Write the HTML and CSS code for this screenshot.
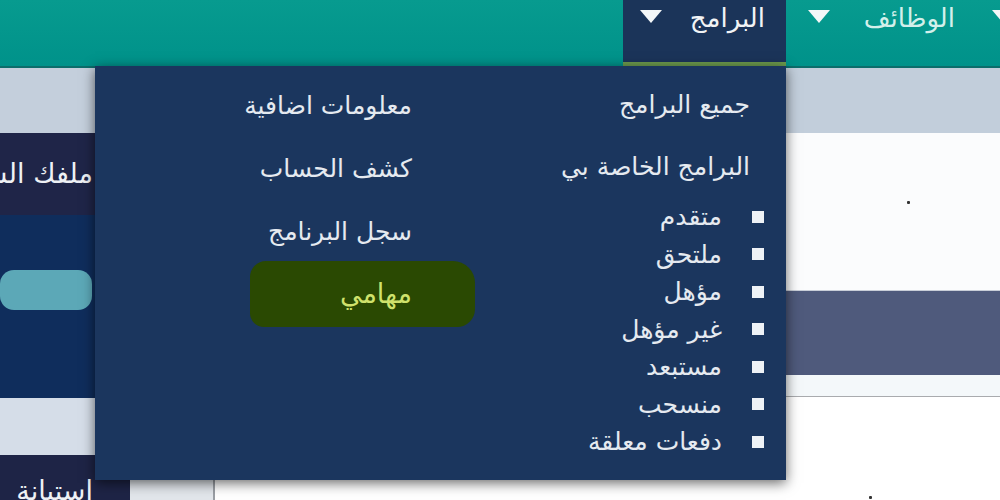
FILE: index.html
```html
<!DOCTYPE html>
<html lang="ar" dir="rtl">
<head>
<meta charset="utf-8">
<title>البرامج</title>
<link rel="stylesheet" href="styles.css">
</head>
<body>
<header class="topbar">
  <nav class="nav">
    <div class="nav-item nav-home"><span class="nav-label">الرئيسية</span><span class="caret"></span></div>
    <div class="nav-item nav-jobs"><span class="nav-label">الوظائف</span><span class="caret"></span></div>
    <div class="nav-item nav-programs active"><span class="nav-label">البرامج</span><span class="caret"></span>
      <div class="dropdown">
        <div class="dd-col dd-col-main">
          <a class="dd-link">جميع البرامج</a>
          <a class="dd-link">البرامج الخاصة بي</a>
          <ul class="dd-sub">
            <li><span class="sq"></span><span>متقدم</span></li>
            <li><span class="sq"></span><span>ملتحق</span></li>
            <li><span class="sq"></span><span>مؤهل</span></li>
            <li><span class="sq"></span><span>غير مؤهل</span></li>
            <li><span class="sq"></span><span>مستبعد</span></li>
            <li><span class="sq"></span><span>منسحب</span></li>
            <li><span class="sq"></span><span>دفعات معلقة</span></li>
          </ul>
        </div>
        <div class="dd-col dd-col-extra">
          <a class="dd-link">معلومات اضافية</a>
          <a class="dd-link">كشف الحساب</a>
          <a class="dd-link">سجل البرنامج</a>
          <a class="dd-link"><span class="mark">مهامي</span></a>
        </div>
      </div>
    </div>
  </nav>
</header>
<main class="page">
  <section class="content">
    <div class="band"></div>
    <div class="row-white"><span class="dot"></span></div>
    <div class="row-slate"></div>
    <div class="row-gap"></div>
    <div class="row-table">
      <div class="tcol-main"><span class="dot"></span></div>
      <div class="tcol-edge"></div>
    </div>
  </section>
  <aside class="sidebar">
    <div class="side-band"></div>
    <div class="side-profile">ملفك الشخصي</div>
    <div class="side-nav"><div class="side-pill"></div></div>
    <div class="side-light"></div>
    <div class="side-survey">إستبانة</div>
  </aside>
</main>
</body>
</html>
```

FILE: styles.css
```css
* { box-sizing: border-box; margin: 0; padding: 0; }
html, body { width: 1000px; height: 500px; overflow: hidden; }
body {
  font-family: "DejaVu Sans", sans-serif;
  background: #fff;
  direction: rtl;
}

/* top bar */
.topbar {
  height: 68px;
  background: linear-gradient(#079b8f, #00928a);
  border-bottom: 2px solid #0c6d6b;
  position: relative;
  z-index: 5;
}
.nav { display: flex; height: 66px; }
.nav-item {
  display: flex;
  align-items: flex-start;
  height: 66px;
  padding: 0 21px 0 17px;
  color: #d3f0eb;
  font-size: 26px;
  line-height: 36px;
  position: relative;
  flex: none;
  white-space: nowrap;
}
.nav-home { width: 240px; margin-right: -215px; }
.nav-jobs { width: 189px; padding-right: 20px; padding-left: 22px; }
.nav-programs { width: 163px; }
.nav-item.active {
  background: #1b3459;
  border-bottom: 4px solid #6c9a4d;
  color: #f1f3f5;
}
.caret {
  margin-right: auto;
  margin-top: 10px;
  width: 0; height: 0;
  border-left: 11px solid transparent;
  border-right: 11px solid transparent;
  border-top: 13px solid #f4f7f8;
}

/* dropdown */
.dropdown {
  position: absolute;
  top: 66px;
  right: 0;
  width: 691px;
  height: 414px;
  background: #1b365e;
  box-shadow: 0 3px 12px rgba(0, 0, 0, 0.6);
  padding: 8px 36px 0 0;
  display: grid;
  grid-template-columns: 338px 1fr;
  font-size: 25px;
  color: #e5eaf0;
}
.dd-link { display: block; height: 62px; line-height: 62px; white-space: nowrap; }
.dd-col-extra .dd-link { height: 63px; line-height: 63px; }
.dd-sub { list-style: none; margin-right: -14px; }
.dd-sub li {
  display: flex;
  align-items: center;
  gap: 30px;
  height: 37.5px;
  line-height: 37.5px;
  white-space: nowrap;
}
.sq { width: 12px; height: 12px; background: #eef2f6; flex: none; }
.mark {
  display: inline-block;
  margin-right: -63px;
  padding: 0 63px 0 90px;
  height: 66px;
  margin-top: -3px;
  line-height: 66px;
  background: #2a4902;
  border-radius: 16px 22px 18px 14px;
  color: #cfe26c;
  font-size: 27px;
}

/* page below bar */
.page { display: flex; height: 432px; }
.sidebar {
  width: 130px;
  flex: none;
  display: flex;
  flex-direction: column;
  overflow: hidden;
  white-space: nowrap;
  color: #eef1f5;
  font-size: 27px;
}
.side-band { height: 65px; background: #c4cfdc; }
.side-profile {
  height: 82px;
  background: #1f2548;
  padding-right: 37px;
  line-height: 82px;
  overflow: hidden;
}
.side-nav { height: 183px; background: #0f2d5c; padding-top: 55px; }
.side-pill {
  width: 92px;
  height: 40px;
  margin-right: 38px;
  background: #5ca8b7;
  border-radius: 14px;
}
.side-light { height: 57px; background: #d5dde8; }
.side-survey {
  flex: 1;
  background: #1e2446;
  padding: 20px 37px 0 0;
  overflow: hidden;
}

.content { flex: 1; display: flex; flex-direction: column; }
.band { height: 65px; background: #c2cedb; }
.row-white {
  height: 157px;
  background: #fbfcfd;
  padding: 68px 90px 0 0;
}
.dot { display: block; width: 3px; height: 3px; background: #333; border-radius: 1px; }
.row-slate { height: 85px; background: #4f5a7c; border-top: 1px solid #c9ced8; }
.row-gap { height: 21px; background: #f4f8fa; }
.row-table {
  flex: 1;
  display: flex;
  border-top: 1px solid #a9abae;
}
.tcol-main { flex: 1; padding: 99px 128px 0 0; background: #fff; }
.tcol-edge {
  width: 85px;
  background: #e2e6eb;
  border-right: 2px solid #9a9ea4;
}
```
